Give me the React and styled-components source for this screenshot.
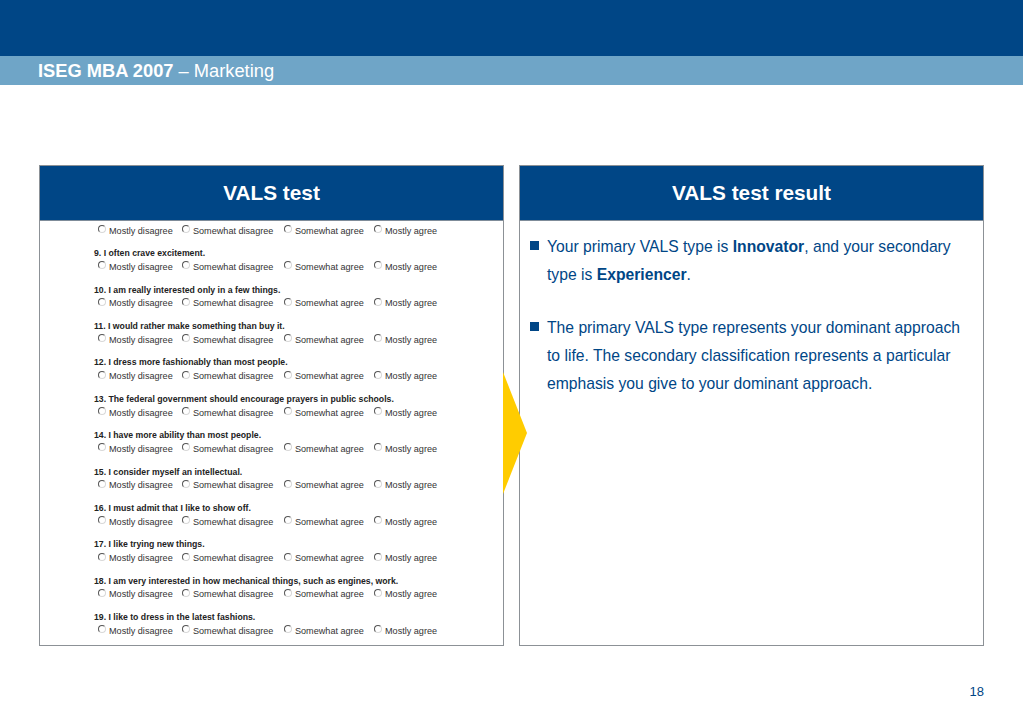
import styled, { createGlobalStyle } from "styled-components";

const questions = [
    "9. I often crave excitement.",
    "10. I am really interested only in a few things.",
    "11. I would rather make something than buy it.",
    "12. I dress more fashionably than most people.",
    "13. The federal government should encourage prayers in public schools.",
    "14. I have more ability than most people.",
    "15. I consider myself an intellectual.",
    "16. I must admit that I like to show off.",
    "17. I like trying new things.",
    "18. I am very interested in how mechanical things, such as engines, work.",
    "19. I like to dress in the latest fashions.",
];

const answers = ["Mostly disagree", "Somewhat disagree", "Somewhat agree", "Mostly agree"];

function Answers() {
    return (
        <AnswerRow>
            {answers.map((answer, i) => (
                <Answer key={i}>
                    <Radio />
                    {answer}
                </Answer>
            ))}
        </AnswerRow>
    );
}

export default function App() {
    return (
        <Page>
            <GlobalStyle />
            <TopBand />
            <TitleBar>
                <strong>ISEG MBA 2007</strong> – Marketing
            </TitleBar>
            <Panels>
                <Panel>
                    <PanelHeader>VALS test</PanelHeader>
                    <Survey>
                        <Answers />
                        {questions.map((q) => (
                            <Question key={q}>
                                <QuestionText>{q}</QuestionText>
                                <Answers />
                            </Question>
                        ))}
                    </Survey>
                </Panel>
                <Panel>
                    <PanelHeader>VALS test result</PanelHeader>
                    <Bullets>
                        <li>
                            Your primary VALS type is <b>Innovator</b>, and your secondary type is{" "}
                            <b>Experiencer</b>.
                        </li>
                        <li>
                            The primary VALS type represents your dominant approach to life. The
                            secondary classification represents a particular emphasis you give to
                            your dominant approach.
                        </li>
                    </Bullets>
                </Panel>
                <Arrow />
            </Panels>
            <PageNumber>18</PageNumber>
        </Page>
    );
}

const GlobalStyle = createGlobalStyle`
    html, body {
        margin: 0;
        background: #fff;
    }
`;

const Page = styled.div`
    width: 1023px;
    height: 708px;
    overflow: hidden;
    display: flex;
    flex-direction: column;
    font-family: "Liberation Sans", Arial, sans-serif;
`;

const TopBand = styled.div`
    height: 56px;
    background: #004686;
`;

const TitleBar = styled.div`
    height: 29px;
    line-height: 30px;
    padding-left: 38px;
    background: #6fa5c7;
    color: #fff;
    font-size: 18.3px;
`;

const Panels = styled.div`
    position: relative;
    display: flex;
    gap: 15px;
    margin: 80px 0 0 39px;
`;

const Panel = styled.div`
    box-sizing: border-box;
    width: 465px;
    height: 481px;
    border: 1px solid #8c9196;
    display: flex;
    flex-direction: column;
`;

const PanelHeader = styled.div`
    height: 54px;
    line-height: 54px;
    flex: none;
    text-align: center;
    background: #004686;
    border-bottom: 1px solid #7f8c99;
    color: #fff;
    font-size: 20.8px;
    font-weight: 700;
`;

const Survey = styled.div`
    padding: 4.3px 0 0 54px;
    display: flex;
    flex-direction: column;
    gap: 13.4px;
    color: #222;
`;

const Question = styled.div`
    display: flex;
    flex-direction: column;
`;

const QuestionText = styled.div`
    height: 11.5px;
    line-height: 7.5px;
    font-size: 8.7px;
    font-weight: 700;
    color: #222;
`;

const AnswerRow = styled.div`
    height: 11.5px;
    display: grid;
    grid-template-columns: 84px 102px 90px auto;
    padding-left: 4px;
`;

const Answer = styled.div`
    display: flex;
    align-items: center;
    gap: 3px;
    font-size: 9.1px;
    line-height: 11px;
    white-space: nowrap;
    color: #333;
`;

const Radio = styled.span`
    box-sizing: border-box;
    width: 8px;
    height: 8px;
    flex: none;
    position: relative;
    top: -2px;
    border-radius: 50%;
    border: 1px solid #d8d8d8;
    border-top-color: #555;
    border-left-color: #555;
    background: #fff;
`;

const Bullets = styled.ul`
    list-style: none;
    margin: 0;
    padding: 12px 20px 0 27px;
    color: #004686;
    font-size: 15.7px;
    line-height: 28px;

    li {
        position: relative;
        margin-bottom: 25px;
    }

    li::before {
        content: "";
        position: absolute;
        left: -17px;
        top: 8px;
        width: 9px;
        height: 9px;
        background: #004686;
    }
`;

const Arrow = styled.div`
    position: absolute;
    left: 464px;
    top: 207px;
    width: 24px;
    height: 122px;
    background: #ffcc00;
    clip-path: polygon(0 0, 100% 50%, 0 100%);
`;

const PageNumber = styled.div`
    margin: 38px 39px 0 0;
    text-align: right;
    font-size: 13px;
    color: #004686;
`;
